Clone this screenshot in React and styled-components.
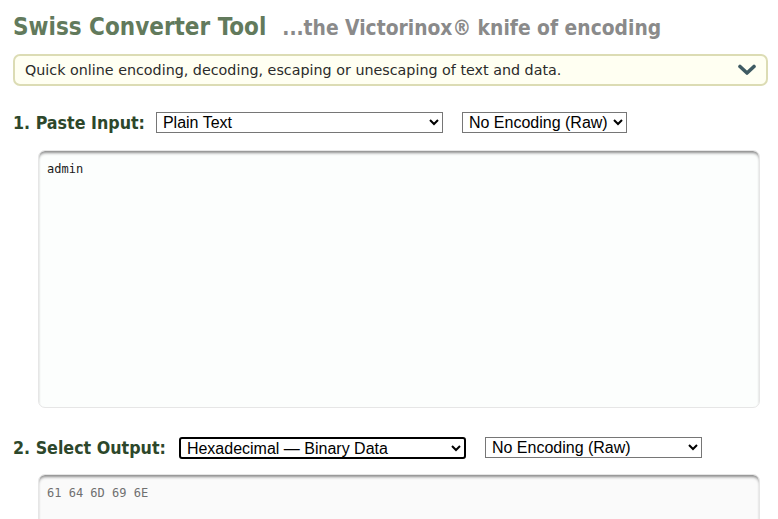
import React from "react";
import styled, { createGlobalStyle } from "styled-components";

const Global = createGlobalStyle`
  html, body { margin: 0; padding: 0; background: #fff; }
  body { font-family: "DejaVu Sans", Verdana, sans-serif; }
`;

const Page = styled.div`
  display: flex;
  flex-direction: column;
  padding: 0 10px 0 13px;
`;

const TitleRow = styled.h1`
  margin: 10px 0 0;
  height: 34px;
  display: flex;
  align-items: baseline;
  gap: 16px;
  font-family: "DejaVu Sans Condensed", "DejaVu Sans", sans-serif;
  font-stretch: condensed;
  font-weight: bold;
  line-height: 34px;
`;

const Title = styled.span`
  font-size: 24px;
  color: #627a5c;
`;

const Subtitle = styled.span`
  font-size: 20.8px;
  color: #8a8a8a;
`;

const Intro = styled.div`
  margin-top: 10px;
  height: 28px;
  display: flex;
  align-items: center;
  justify-content: space-between;
  padding: 0 10px 0 10px;
  background: #fffff2;
  border: 2px solid #dcdcb4;
  border-radius: 7px;
  font-size: 14.3px;
  color: #2b2b2b;
`;

const Row = styled.div`
  display: flex;
  align-items: center;
  margin-top: ${(p) => p.$top}px;
  height: 21px;
`;

const Label = styled.span`
  font-family: "DejaVu Sans Condensed", "DejaVu Sans", sans-serif;
  font-stretch: condensed;
  font-weight: bold;
  font-size: 17.7px;
  color: #2d472b;
  margin-right: ${(p) => p.$gap}px;
  white-space: nowrap;
`;

const Select = styled.select`
  height: ${(p) => (p.$focus ? 22 : 21)}px;
  width: ${(p) => p.$w}px;
  margin-right: ${(p) => p.$mr || 0}px;
  font-family: "Liberation Sans", Arial, sans-serif;
  font-size: 16px;
  color: #000;
  background: #fff;
  border: ${(p) => (p.$focus ? "2px solid #000" : "1px solid #767676")};
  border-radius: ${(p) => (p.$focus ? 3 : 0)}px;
  padding: 0 0 0 2px;
  outline: none;
`;

const Area = styled.textarea`
  display: block;
  box-sizing: border-box;
  margin: ${(p) => p.$top}px 0 0 25px;
  width: 722px;
  height: ${(p) => p.$h}px;
  resize: none;
  border: 1px solid #e6e6e6;
  border-radius: 7px;
  box-shadow: inset 0 3px 3px -1px #8a8a8a;
  background: ${(p) => p.$bg};
  color: ${(p) => p.$color};
  font-family: "DejaVu Sans Mono", monospace;
  font-size: 12px;
  line-height: 16px;
  padding: 10px 8px;
  outline: none;
`;

const Chevron = () => (
  <svg width="18" height="12" viewBox="0 0 18 12">
    <polyline
      points="2,2.5 9,9 16,2.5"
      fill="none"
      stroke="#3f5b63"
      strokeWidth="3.6"
      strokeLinecap="round"
      strokeLinejoin="round"
    />
  </svg>
);

export default function App() {
  return (
    <Page>
      <Global />
      <TitleRow>
        <Title>Swiss Converter Tool</Title>
        <Subtitle>...the Victorinox® knife of encoding</Subtitle>
      </TitleRow>
      <Intro>
        <span>Quick online encoding, decoding, escaping or unescaping of text and data.</span>
        <Chevron />
      </Intro>
      <Row $top={26}>
        <Label $gap={11}>1. Paste Input:</Label>
        <Select $w={287} $mr={19} defaultValue="plain">
          <option value="plain">Plain Text</option>
        </Select>
        <Select $w={165} defaultValue="raw">
          <option value="raw">No Encoding (Raw)</option>
        </Select>
      </Row>
      <Area $top={17} $h={258} $bg="#fcfefd" $color="#1a1a1a" defaultValue="admin" />
      <Row $top={29}>
        <Label $gap={13}>2. Select Output:</Label>
        <Select $w={287} $mr={19} $focus defaultValue="hex">
          <option value="hex">Hexadecimal — Binary Data</option>
        </Select>
        <Select $w={217} defaultValue="raw">
          <option value="raw">No Encoding (Raw)</option>
        </Select>
      </Row>
      <Area $top={16} $h={120} $bg="#fafafa" $color="#707070" defaultValue="61 64 6D 69 6E" readOnly />
    </Page>
  );
}
